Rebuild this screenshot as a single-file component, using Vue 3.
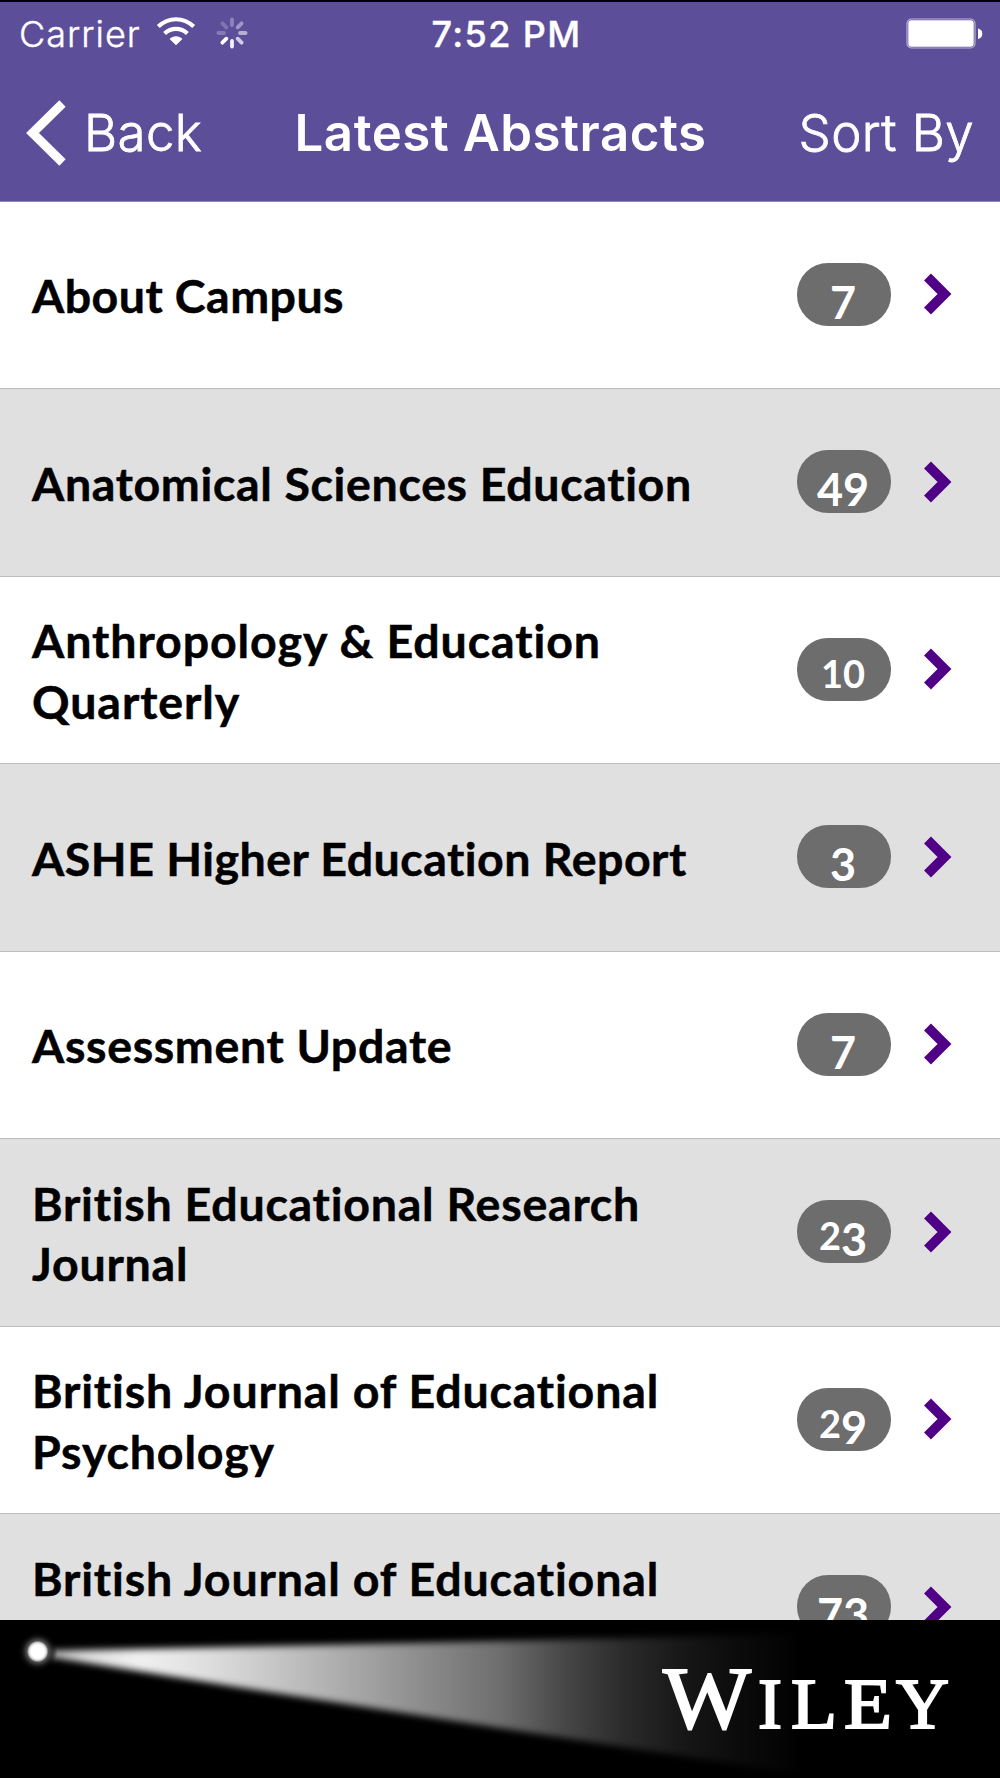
<script setup>
const journals = [
  { lines: ['About Campus'], count: 7, tracking: 0.45 },
  { lines: ['Anatomical Sciences Education'], count: 49, tracking: 0.66 },
  { lines: ['Anthropology & Education', 'Quarterly'], count: 10, tracking: 0.93 },
  { lines: ['ASHE Higher Education Report'], count: 3, tracking: 0.5 },
  { lines: ['Assessment Update'], count: 7, tracking: 0.66 },
  { lines: ['British Educational Research', 'Journal'], count: 23, tracking: 0.77 },
  { lines: ['British Journal of Educational', 'Psychology'], count: 29, tracking: 0.84 },
  { lines: ['British Journal of Educational', 'Technology'], count: 73, tracking: 0.84 },
]

const spokes = [0.3, 0.42, 0.55, 0.72, 0.92, 1, 0.26, 0.22]

// Text figures: 0-2 sit at x-height, 3-5, 7 and 9 hang below the baseline.
const figures = (n) =>
  String(n).split('').map((d) => ({ d, kind: '012'.includes(d) ? 'short' : '68'.includes(d) ? 'tall' : 'hang' }))
</script>

<template>
  <div class="screen">
    <header class="top">
      <div class="status">
        <div class="side">
          <span class="carrier">Carrier</span>
          <svg class="wifi" width="40" height="30" viewBox="0 0 40 30">
            <g fill="none" stroke="#fff" stroke-width="4.2">
              <path d="M2.3 9.6C12.5-.2 27.5-.2 37.7 9.6" />
              <path d="M8.6 16.5C15 10.3 25 10.3 31.4 16.5" />
            </g>
            <path d="M20 28.3L13.6 21.9C17.2 18.5 22.8 18.5 26.4 21.9Z" fill="#fff" />
          </svg>
          <svg class="spinner" width="32" height="32" viewBox="-16 -16 32 32">
            <line
              v-for="(o, i) in spokes" :key="i"
              x1="0" y1="-8" x2="0" y2="-13.6"
              stroke="#fff" stroke-width="3.8" stroke-linecap="round"
              :opacity="o" :transform="`rotate(${i * 45})`"
            />
          </svg>
        </div>
        <span class="clock">7:52 PM</span>
        <svg class="battery" width="78" height="32" viewBox="0 0 78 32">
          <rect x="1" y="1" width="68" height="29" rx="4.5" fill="none" stroke="#b9b1d8" stroke-width="1.2" />
          <rect x="2.3" y="2.3" width="65.4" height="26.4" rx="3" fill="#fff" />
          <path d="M72 10.5Q76.3 11.5 76.3 15.7T72 21Z" fill="#fff" />
        </svg>
      </div>
      <nav class="nav">
        <a class="back">
          <svg width="42" height="66" viewBox="0 0 42 66">
            <path d="M37.5 3.5L7.5 33L37.5 62.5" fill="none" stroke="#fff" stroke-width="9" />
          </svg>
          <span>Back</span>
        </a>
        <h1>Latest Abstracts</h1>
        <a class="sort">Sort By</a>
      </nav>
    </header>

    <main class="list">
      <div v-for="(j, i) in journals" :key="i" class="row">
        <div class="name" :style="{ letterSpacing: j.tracking + 'px' }">
          <div v-for="l in j.lines" :key="l">{{ l }}</div>
        </div>
        <div class="pill">
          <span v-for="(f, k) in figures(j.count)" :key="k" :class="f.kind">{{ f.d }}</span>
        </div>
        <svg class="chevron" width="30" height="42" viewBox="0 0 30 42">
          <path d="M3.5 4L20.5 21L3.5 38" fill="none" stroke="#4f0087" stroke-width="9.8" />
        </svg>
      </div>
    </main>

    <footer class="brand">
      <svg width="1000" height="158" viewBox="0 0 1000 158">
        <defs>
          <linearGradient id="beam" gradientUnits="userSpaceOnUse" x1="40" y1="0" x2="800" y2="0">
            <stop offset="0" stop-color="#bbb" />
            <stop offset=".06" stop-color="#ddd" />
            <stop offset=".13" stop-color="#f0f0f0" />
            <stop offset=".22" stop-color="#dedede" />
            <stop offset=".3" stop-color="#c8c8c8" />
            <stop offset=".41" stop-color="#a8a8a8" />
            <stop offset=".51" stop-color="#8a8a8a" />
            <stop offset=".605" stop-color="#6e6e6e" />
            <stop offset=".69" stop-color="#474747" />
            <stop offset=".77" stop-color="#2a2a2a" />
            <stop offset=".85" stop-color="#161616" />
            <stop offset=".92" stop-color="#0b0b0b" />
            <stop offset=".97" stop-color="#050505" />
            <stop offset="1" stop-color="#000" />
          </linearGradient>
          <radialGradient id="glow">
            <stop offset="0" stop-color="#fff" />
            <stop offset=".34" stop-color="#fff" />
            <stop offset=".45" stop-color="#ccc" />
            <stop offset=".53" stop-color="#555" />
            <stop offset=".75" stop-color="#1c1c1c" stop-opacity=".7" />
            <stop offset="1" stop-color="#000" stop-opacity="0" />
          </radialGradient>
          <filter id="soft" filterUnits="userSpaceOnUse" x="0" y="-20" width="1000" height="200" color-interpolation-filters="sRGB">
            <feGaussianBlur stdDeviation="3.5" />
          </filter>
        </defs>
        <path d="M38 31L300 25.5L500 21L800 14V154L500 108L250 69L38 35Z" fill="url(#beam)" filter="url(#soft)" />
        <circle cx="37.7" cy="31.5" r="20" fill="url(#glow)" />
        <g class="wordmark">
          <text x="663" y="108" font-size="89" textLength="88" lengthAdjust="spacingAndGlyphs">W</text>
          <text x="758" y="107.5" font-size="72">I</text>
          <text x="791" y="107.5" font-size="72" textLength="46" lengthAdjust="spacingAndGlyphs">L</text>
          <text x="844" y="107.5" font-size="72" textLength="48" lengthAdjust="spacingAndGlyphs">E</text>
          <text x="896" y="107.5" font-size="72" textLength="53" lengthAdjust="spacingAndGlyphs">Y</text>
        </g>
      </svg>
    </footer>
  </div>
</template>

<style>
body {
  margin: 0;
}
</style>

<style scoped>
.screen {
  width: 1000px;
  height: 1778px;
  display: flex;
  flex-direction: column;
  overflow: hidden;
  background: #fff;
}
.top {
  flex: none;
  box-sizing: border-box;
  height: 202px;
  border-top: 2px solid #000;
  border-bottom: 1px solid #8f88ad;
  background: #5c4e99;
  color: #fff;
  font-family: Inter, "Liberation Sans", sans-serif;
}
.status {
  height: 64px;
  display: grid;
  grid-template-columns: 1fr auto 1fr;
  align-items: center;
  padding: 0 16px 0 19px;
}
.side {
  display: flex;
  align-items: center;
}
.carrier {
  font-size: 36px;
  font-weight: 300;
  letter-spacing: 1px;
  width: 137px;
  -webkit-text-stroke: 0.4px #fff;
}
.wifi {
  margin-top: -5px;
}
.spinner {
  margin-left: 20px;
  margin-top: -3px;
}
.clock {
  font-size: 36px;
  font-weight: 550;
  letter-spacing: 1.4px;
  padding-left: 10px;
  -webkit-text-stroke: 0.4px #fff;
}
.battery {
  justify-self: end;
}
.nav {
  height: 134px;
  display: grid;
  grid-template-columns: 1fr auto 1fr;
  align-items: center;
  padding: 0 26px 0 25px;
  font-size: 51px;
}
.back {
  display: flex;
  align-items: center;
  gap: 17px;
}
.back span,
h1,
.sort {
  padding-bottom: 2px;
}
.back span,
.sort {
  font-weight: 300;
  letter-spacing: 0.4px;
  -webkit-text-stroke: 0.8px #fff;
}
h1 {
  margin: 0;
  font-size: 51px;
  font-weight: 600;
  letter-spacing: 0.5px;
  padding-left: 2px;
}
.sort {
  justify-self: end;
}
.list {
  height: 1418px;
  flex: none;
  overflow: hidden;
}
.row {
  box-sizing: border-box;
  height: 188px;
  display: flex;
  align-items: center;
  padding: 0 0 2px 32px;
  border-top: 1px solid #bdbdc1;
}
.row:nth-child(odd) {
  height: 187px;
}
.row:first-child {
  border-top: 0;
  height: 186px;
}
.row:nth-child(even) {
  background: #e0e0e0;
}
.name {
  width: 765px;
  padding-top: 3px;
  font: 700 46.5px/60.5px Lato, "Open Sans", sans-serif;
  font-variant-ligatures: none;
  color: #000;
  white-space: nowrap;
  -webkit-text-stroke: 0.5px #000;
}
.pill {
  box-sizing: border-box;
  width: 94px;
  height: 63px;
  padding-right: 2px;
  border-radius: 31px;
  background: #6d6d6d;
  color: #fff;
  display: flex;
  justify-content: center;
  font: 700 45px/79px Lato, "Open Sans", sans-serif;
}
.pill .short {
  font-size: 38px;
  line-height: 71px;
}
.pill .tall {
  line-height: 66px;
}
.chevron {
  margin-left: 33px;
}
.brand {
  height: 158px;
  flex: none;
  background: #000;
}
.brand svg {
  display: block;
}
.wordmark {
  fill: #fff;
  stroke: #fff;
  stroke-width: 2px;
  font-family: "Liberation Serif", serif;
}
</style>
